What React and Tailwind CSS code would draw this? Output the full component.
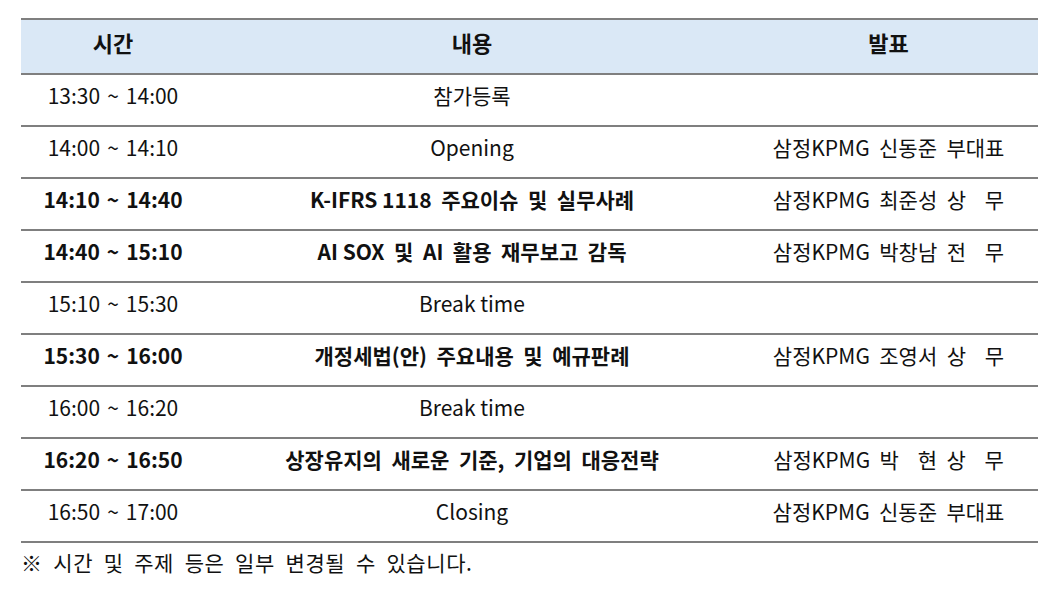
const sep = '\u2004~\u2004';

const rows = [
  { time: '13:30' + sep + '14:00', title: '참가등록', who: '' },
  { time: '14:00' + sep + '14:10', title: 'Opening', who: '삼정KPMG  신동준  부대표' },
  { time: '14:10' + sep + '14:40', title: 'K-IFRS 1118  주요이슈  및  실무사례', who: '삼정KPMG  최준성  상    무', bold: true },
  { time: '14:40' + sep + '15:10', title: 'AI SOX  및  AI  활용  재무보고  감독', who: '삼정KPMG  박창남  전    무', bold: true },
  { time: '15:10' + sep + '15:30', title: 'Break time', who: '' },
  { time: '15:30' + sep + '16:00', title: '개정세법(안)  주요내용  및  예규판례', who: '삼정KPMG  조영서  상    무', bold: true },
  { time: '16:00' + sep + '16:20', title: 'Break time', who: '' },
  { time: '16:20' + sep + '16:50', title: '상장유지의  새로운  기준,  기업의  대응전략', who: '삼정KPMG  박    현  상    무', bold: true },
  { time: '16:50' + sep + '17:00', title: 'Closing', who: '삼정KPMG  신동준  부대표' },
];

function App() {
  return (
    <div
      className="w-[1061px] h-[591px] bg-white text-[#111] overflow-hidden"
      style={{ fontFamily: '"Noto Sans CJK KR", "Noto Sans", sans-serif' }}
    >
      <div className="pt-[18px] pl-[21px] w-[1038px]">
        {/* Header */}
        <div className="flex h-[57px] bg-[#dae8f6] border-t-2 border-b-2 border-[#7f7f7f] text-[22px] font-bold leading-[30px]">
          <div className="w-[184px] text-center pt-[7px]">시간</div>
          <div className="w-[534px] text-center pt-[7px]">내용</div>
          <div className="flex-1 text-center pt-[7px]">발표</div>
        </div>

        {/* Rows */}
        {rows.map((r, i) => (
          <div
            key={i}
            className="flex h-[52px] border-b-2 border-[#7f7f7f] text-[21px] leading-[28px]"
          >
            <div className={`w-[184px] text-center pt-[6px] whitespace-pre ${r.bold ? 'font-bold' : ''}`}>{r.time}</div>
            <div className={`w-[534px] text-center pt-[6px] whitespace-pre ${r.bold ? 'font-bold' : ''}`}>{r.title}</div>
            <div className="flex-1 text-center pt-[6px] whitespace-pre">{r.who}</div>
          </div>
        ))}
      </div>

      <div className="pl-[21px] pt-[5px] text-[21px] leading-[28px] whitespace-pre tracking-[0.6px]">
        ※  시간  및  주제  등은  일부  변경될  수  있습니다.
      </div>
    </div>
  );
}

export default App;
